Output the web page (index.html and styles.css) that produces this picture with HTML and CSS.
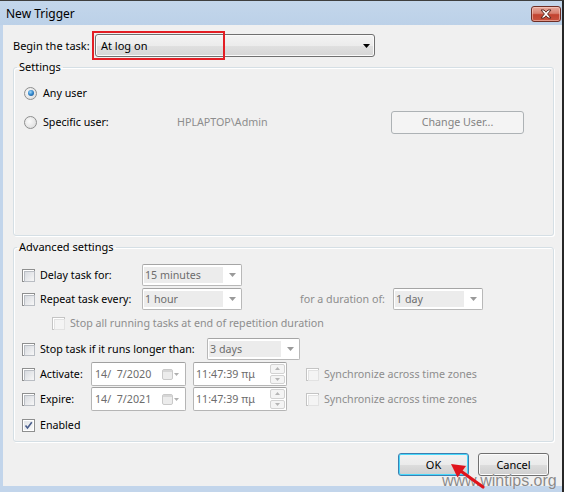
FILE: index.html
```html
<!DOCTYPE html>
<html>
<head>
<meta charset="utf-8">
<title>New Trigger</title>
<link rel="stylesheet" href="styles.css">
</head>
<body>
<div class="window">
  <div class="titlebar">
    <span class="title">New Trigger</span>
    <div class="close">
      <svg width="14" height="10" viewBox="0 0 14 10"><path d="M2 1h3l2 2.2L9 1h3L8.6 5 12 9H9L7 6.8 5 9H2l3.4-4z" fill="#fff" stroke="#5a2a22" stroke-width="1"/></svg>
    </div>
  </div>
  <div class="client">
    <div class="begin-row">
      <span class="lbl-begin">Begin the task:</span>
      <div class="dropdown">
        <span>At log on</span>
        <svg width="7" height="4" viewBox="0 0 7 4"><path d="M0 0h7L3.5 4z" fill="#000"/></svg>
      </div>
    </div>

    <fieldset class="group group-settings">
      <legend>Settings</legend>
      <div class="srow srow-first">
        <span class="radio checked"></span><span class="rlabel">Any user</span>
      </div>
      <div class="srow srow-second">
        <span class="radio"></span><span class="rlabel lbl-specific">Specific user:</span>
        <span class="muted user">HPLAPTOP\Admin</span>
        <div class="btn btn-disabled change">Change User...</div>
      </div>
    </fieldset>

    <fieldset class="group group-adv">
      <legend>Advanced settings</legend>
      <div class="arow">
        <span class="cb"></span><span class="clabel w-delay">Delay task for:</span>
        <div class="combo w100"><span class="val">15 minutes</span><span class="dd"><svg width="7" height="4" viewBox="0 0 7 4"><path d="M0 0h7L3.5 4z" fill="#9a9a9a"/></svg></span></div>
      </div>
      <div class="arow">
        <span class="cb"></span><span class="clabel w-delay">Repeat task every:</span>
        <div class="combo w100"><span class="val">1 hour</span><span class="dd"><svg width="7" height="4" viewBox="0 0 7 4"><path d="M0 0h7L3.5 4z" fill="#9a9a9a"/></svg></span></div>
        <span class="muted dur-label">for a duration of:</span>
        <div class="combo w90"><span class="val">1 day</span><span class="dd"><svg width="7" height="4" viewBox="0 0 7 4"><path d="M0 0h7L3.5 4z" fill="#9a9a9a"/></svg></span></div>
      </div>
      <div class="arow indent">
        <span class="cb cb-disabled"></span><span class="clabel muted">Stop all running tasks at end of repetition duration</span>
      </div>
      <div class="arow row-stop">
        <span class="cb"></span><span class="clabel w-stop">Stop task if it runs longer than:</span>
        <div class="combo w93"><span class="val">3 days</span><span class="dd"><svg width="7" height="4" viewBox="0 0 7 4"><path d="M0 0h7L3.5 4z" fill="#9a9a9a"/></svg></span></div>
      </div>
      <div class="arow row-date">
        <span class="cb"></span><span class="clabel w-act">Activate:</span>
        <div class="picker date"><span class="pval">14/&nbsp;&nbsp;7/2020</span>
          <svg class="cal" width="17" height="11" viewBox="0 0 17 11"><rect x="0.5" y="0.5" width="10" height="10" rx="1.5" fill="#ececec" stroke="#c9c9c9"/><rect x="1" y="1" width="9" height="2" fill="#d6d6d6"/><path d="M12 4h5l-2.5 3z" fill="#b0b0b0"/></svg>
        </div>
        <div class="picker time"><span class="pval">11:47:39 πμ</span>
          <span class="spin"><span class="sp"><svg width="5" height="3" viewBox="0 0 5 3"><path d="M0 3h5L2.5 0z" fill="#b5b5b5"/></svg></span><span class="sp"><svg width="5" height="3" viewBox="0 0 5 3"><path d="M0 0h5L2.5 3z" fill="#b5b5b5"/></svg></span></span>
        </div>
        <span class="cb cb-disabled sync-cb"></span><span class="clabel muted">Synchronize across time zones</span>
      </div>
      <div class="arow row-date">
        <span class="cb"></span><span class="clabel w-act">Expire:</span>
        <div class="picker date"><span class="pval">14/&nbsp;&nbsp;7/2021</span>
          <svg class="cal" width="17" height="11" viewBox="0 0 17 11"><rect x="0.5" y="0.5" width="10" height="10" rx="1.5" fill="#ececec" stroke="#c9c9c9"/><rect x="1" y="1" width="9" height="2" fill="#d6d6d6"/><path d="M12 4h5l-2.5 3z" fill="#b0b0b0"/></svg>
        </div>
        <div class="picker time"><span class="pval">11:47:39 πμ</span>
          <span class="spin"><span class="sp"><svg width="5" height="3" viewBox="0 0 5 3"><path d="M0 3h5L2.5 0z" fill="#b5b5b5"/></svg></span><span class="sp"><svg width="5" height="3" viewBox="0 0 5 3"><path d="M0 0h5L2.5 3z" fill="#b5b5b5"/></svg></span></span>
        </div>
        <span class="cb cb-disabled sync-cb"></span><span class="clabel muted">Synchronize across time zones</span>
      </div>
      <div class="arow row-enabled">
        <span class="cb cb-checked"><svg width="9" height="9" viewBox="0 0 9 9"><path d="M1.5 4.5l2 2.5L7.8 1.2" fill="none" stroke="#4a5e8c" stroke-width="1.6"/></svg></span><span class="clabel">Enabled</span>
      </div>
    </fieldset>

    <div class="buttons">
      <div class="btn btn-default">OK</div>
      <div class="btn">Cancel</div>
    </div>
  </div>

  <div class="annot-box"></div>
  <div class="watermark">www.wintips.org</div>
  <svg class="annot-arrow" width="50" height="37" viewBox="440 455 50 37">
    <path d="M483 487L460 470.5" stroke="#e0141c" stroke-width="3.2" fill="none" stroke-linecap="round"/>
    <path d="M451 464L466 466L457.5 477.5z" fill="#e0141c"/>
  </svg>
</div>
</body>
</html>
```
FILE: styles.css
```css
* { box-sizing: border-box; }

body {
  margin: 0;
  background: #ffffff;
  font-family: "Noto Sans", "Open Sans", sans-serif;
  font-size: 10.7px;
  color: #000;
}

.window {
  position: relative;
  width: 564px;
  height: 492px;
  background: #c2d5eb;
  border-top: 1px solid #3e3e3e;
  border-right: 2px solid #262626;
  display: flex;
  flex-direction: column;
  overflow: hidden;
}

.titlebar {
  height: 24px;
  flex: none;
  display: flex;
  justify-content: space-between;
  align-items: flex-start;
  padding-left: 6px;
  background: linear-gradient(#c3d6eb, #bcd1e8);
}

.title {
  font-size: 12px;
  line-height: 14px;
  margin-top: 6px;
  color: #000;
}

.close {
  width: 30px;
  height: 16px;
  margin-top: 5px;
  margin-right: 1px;
  border: 1px solid #6e2e25;
  border-radius: 3px;
  background: linear-gradient(#e6a99d 0%, #d8806f 45%, #c2432f 55%, #c9533f 100%);
  box-shadow: inset 0 0 0 1px rgba(255, 220, 210, 0.5);
  display: flex;
  align-items: center;
  justify-content: center;
}

.client {
  flex: none;
  height: 461px;
  margin-left: 3px;
  background: #f0f0f0;
  padding: 9px 0 0 10px;
  display: flex;
  flex-direction: column;
}

.begin-row {
  display: flex;
  align-items: center;
  height: 23px;
}

.lbl-begin { width: 82px; flex: none; font-size: 11px; }

.dropdown {
  width: 280px;
  height: 23px;
  border: 1px solid #707070;
  border-radius: 3px;
  background: linear-gradient(#f3f3f3 0%, #ececec 50%, #e0e0e0 51%, #d6d6d6 100%);
  box-shadow: inset 0 0 0 1px #fafafa;
  display: flex;
  align-items: center;
  justify-content: space-between;
  padding: 0 4px 0 5px;
  font-size: 11px;
}

.group {
  margin: 0;
  width: 541px;
  border: 1px solid #d5dfe5;
  border-radius: 3px;
  box-shadow: inset 1px 1px 0 #fff, 1px 1px 0 #fff;
  padding: 0;
  min-width: 0;
}

.group legend {
  padding: 0 2px;
  margin-left: 3px;
  line-height: 16px;
  height: 16px;
  font-size: 11px;
}

.group-settings {
  margin-top: 2px;
  height: 177px;
  padding-top: 6px;
}

.srow {
  display: flex;
  align-items: center;
  height: 24px;
  padding-left: 10px;
}

.srow-second { margin-top: 5px; }

.radio {
  width: 13px;
  height: 13px;
  flex: none;
  border-radius: 50%;
  border: 1px solid #8e8f8f;
  background: radial-gradient(circle at 40% 40%, #fbfbfb 0%, #e6e6e6 60%, #d4d4d4 100%);
  display: flex;
  align-items: center;
  justify-content: center;
}

.radio.checked::before {
  content: "";
  width: 6px;
  height: 6px;
  border-radius: 50%;
  background: radial-gradient(circle at 40% 35%, #9fd9fb 0%, #2f83c9 50%, #1b4f86 100%);
}

.rlabel { margin-left: 6px; }
.lbl-specific { width: 134px; flex: none; }

.muted { color: #8d8d8d; }

.user { width: 214px; flex: none; }

.btn {
  height: 23px;
  border: 1px solid #707070;
  border-radius: 3px;
  background: linear-gradient(#f2f2f2 0%, #ebebeb 50%, #dddddd 51%, #cfcfcf 100%);
  box-shadow: inset 0 0 0 1px #fcfcfc;
  display: flex;
  align-items: center;
  justify-content: center;
  flex: none;
}

.btn-disabled {
  border-color: #adb2b5;
  background: #f4f4f4;
  box-shadow: none;
  color: #838383;
}

.change { width: 133px; }

.group-adv {
  margin-top: 3px;
  height: 203px;
  padding-top: 8px;
}

.arow {
  display: flex;
  align-items: center;
  height: 24px;
  padding-left: 8px;
}

.arow.indent { padding-left: 38px; }
.row-stop { margin-top: 2px; }
.row-date { margin-top: 1px; height: 24px; }
.row-enabled { margin-top: 2px; }

.cb {
  width: 13px;
  height: 13px;
  flex: none;
  border: 1px solid #8e8f8f;
  background: #fff;
  padding: 1px;
}

.cb::before {
  content: "";
  display: block;
  width: 9px;
  height: 9px;
  border: 1px solid #b9bdc3;
  background: linear-gradient(135deg, #d8dbe0 0%, #f7f7f7 100%);
}

.cb-disabled { border-color: #c4c4c4; }
.cb-disabled::before { border-color: #e2e2e2; background: #f4f4f4; }

.cb-checked::before { display: none; }
.cb-checked {
  display: flex;
  align-items: center;
  justify-content: center;
  padding: 0;
  background: linear-gradient(135deg, #dfe2e6 0%, #fbfbfb 100%);
  box-shadow: inset 0 0 0 1px #fff;
}

.clabel { margin-left: 5px; }
.w-delay { width: 102px; flex: none; }
.w-stop { width: 167px; flex: none; }
.w-act { width: 51px; flex: none; }

.combo {
  height: 22px;
  border: 1px solid #b8b8b8;
  border-top-color: #a5a5a5;
  border-radius: 2px;
  background: #fff;
  padding: 2px 0 2px 1px;
  display: flex;
  flex: none;
}

.combo .val {
  flex: 1;
  background: #ececec;
  color: #6d6d6d;
  padding-left: 1px;
  display: flex;
  align-items: center;
}

.combo .dd {
  width: 18px;
  flex: none;
  display: flex;
  align-items: center;
  justify-content: center;
}

.w100 { width: 100px; }
.w90 { width: 90px; }
.w93 { width: 93px; }

.dur-label { margin-left: 58px; width: 93px; flex: none; }

.picker {
  height: 24px;
  border: 1px solid #b5b5b5;
  border-top-color: #a0a0a0;
  border-radius: 2px;
  background: #fff;
  display: flex;
  align-items: center;
  justify-content: space-between;
  flex: none;
  color: #6d6d6d;
}

.date { width: 95px; padding: 0 6px 0 3px; }
.time { width: 94px; margin-left: 7px; padding: 0 1px 0 2px; }

.spin {
  display: flex;
  flex-direction: column;
  gap: 1px;
  width: 15px;
  height: 20px;
}

.sp {
  flex: 1;
  border: 1px solid #d2d2d2;
  border-radius: 2px;
  background: #f4f4f4;
  display: flex;
  align-items: center;
  justify-content: center;
}

.sync-cb { margin-left: 19px; }

.buttons {
  display: flex;
  justify-content: flex-end;
  gap: 9px;
  padding-right: 13px;
  margin-top: 11px;
}

.buttons .btn { width: 71px; font-size: 11px; }

.btn-default {
  border-color: #3c7fb1;
  box-shadow: inset 0 0 0 1px #48d8fb;
}

.annot-box {
  position: absolute;
  left: 92px;
  top: 30px;
  width: 133px;
  height: 29px;
  border: 2px solid #e31e24;
}

.watermark {
  position: absolute;
  left: 442px;
  top: 472px;
  font-family: "Liberation Sans", Arial, sans-serif;
  font-size: 16px;
  line-height: 16px;
  color: #8a8a8a;
  text-shadow: 0 0 1px #fff;
}

.annot-arrow {
  position: absolute;
  left: 440px;
  top: 454px;
}
```
